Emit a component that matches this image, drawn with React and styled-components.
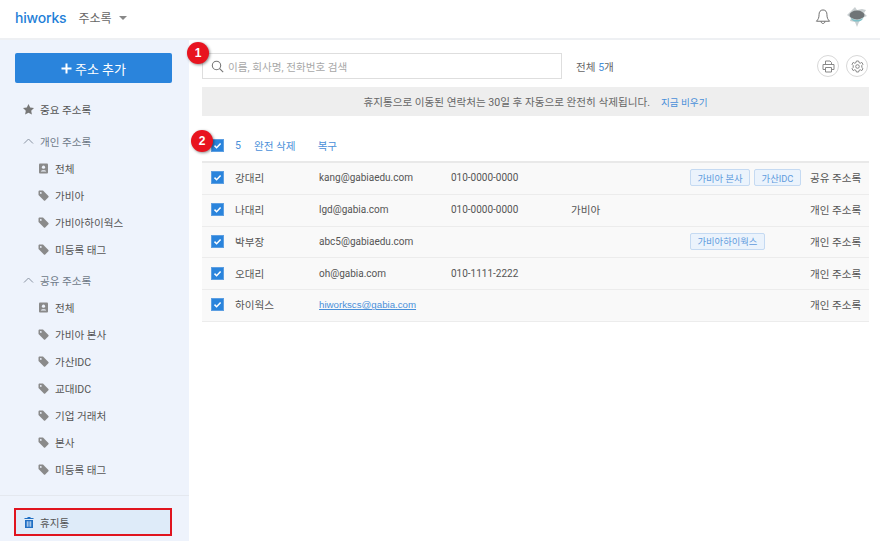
import React from "react";
import styled, { createGlobalStyle } from "styled-components";

const GlobalStyle = createGlobalStyle`
  html, body {
    margin: 0;
    padding: 0;
    background: #fff;
  }
  body {
    font-family: "Roboto", "Noto Sans CJK KR", sans-serif;
    font-size: 10.6px;
    color: #555;
  }
`;

const Page = styled.div`
  position: relative;
  width: 880px;
  height: 541px;
  overflow: hidden;
  display: flex;
  flex-direction: column;
`;

const Header = styled.header`
  display: flex;
  align-items: center;
  flex: none;
  height: 40px;
  padding: 0 13px 4px 15px;
  box-sizing: border-box;
  border-bottom: 2px solid #eef0f3;
`;

const Logo = styled.div`
  font-family: "Inter", "Liberation Sans", sans-serif;
  font-size: 14px;
  font-weight: 500;
  letter-spacing: -0.2px;
  color: #1f7fd8;
`;

const AppName = styled.div`
  margin-left: 12px;
  font-size: 12px;
  color: #666;
`;

const Caret = styled.span`
  margin-left: 7px;
  margin-top: 1px;
  width: 0;
  height: 0;
  border-left: 4px solid transparent;
  border-right: 4px solid transparent;
  border-top: 4px solid #888;
`;

const HeaderIcons = styled.div`
  margin-left: auto;
  display: flex;
  align-items: center;
  gap: 16px;
`;

const Body = styled.div`
  flex: 1;
  display: flex;
  min-height: 0;
`;

const Sidebar = styled.aside`
  width: 189px;
  flex: none;
  background: #eef3fc;
  display: flex;
  flex-direction: column;
  padding-top: 13px;
  box-sizing: border-box;
`;

const AddButton = styled.button`
  margin: 0 17px 0 15px;
  height: 30px;
  border: 0;
  border-radius: 2px;
  background: #2a84dc;
  color: #fff;
  font: inherit;
  font-size: 13px;
  display: flex;
  align-items: center;
  justify-content: center;
  gap: 3px;
  padding: 0;
`;

const Nav = styled.nav`
  flex: 1;
  padding-top: 13px;
`;

const Row = styled.div`
  display: flex;
  align-items: center;
  height: 27px;
  padding-left: ${(p) => (p.$child ? "38px" : "23px")};
  margin-top: ${(p) => (p.$gap ? `${p.$gap}px` : 0)};
  gap: 6px;
  color: ${(p) => (p.$group ? "#6f7a88" : "#555")};
`;

const SideFooter = styled.div`
  flex: none;
  height: 46px;
  box-sizing: border-box;
  border-top: 1px solid #e4e8ef;
  padding: 12px 17px 0 14px;
`;

const TrashItem = styled.div`
  height: 28px;
  box-sizing: border-box;
  border: 2px solid #e0141f;
  background: #deebf9;
  display: flex;
  align-items: center;
  gap: 6px;
  padding-left: 8px;
  color: #555;
`;

const Main = styled.main`
  flex: 1;
  padding: 13px 11px 0 13px;
  min-width: 0;
`;

const SearchRow = styled.div`
  display: flex;
  align-items: center;
  height: 26px;
`;

const SearchBox = styled.div`
  width: 360px;
  height: 26px;
  box-sizing: border-box;
  border: 1px solid #dedede;
  display: flex;
  align-items: center;
  gap: 4px;
  padding-left: 8px;
  color: #a8a8a8;
`;

const Total = styled.div`
  margin-left: 14px;
  color: #666;
`;

const Blue = styled.span`
  color: #4a90d9;
`;

const RoundButtons = styled.div`
  margin-left: auto;
  display: flex;
  gap: 7px;
  padding-right: 1px;
`;

const RoundButton = styled.div`
  width: 22px;
  height: 22px;
  box-sizing: border-box;
  border: 1px solid #d8d8d8;
  border-radius: 50%;
  display: flex;
  align-items: center;
  justify-content: center;
`;

const Notice = styled.div`
  margin-top: 8px;
  height: 29px;
  background: #eeeeee;
  display: flex;
  align-items: center;
  justify-content: center;
  gap: 11px;
  color: #666;
`;

const NoticeLink = styled.span`
  color: #4a90d9;
  font-size: 9.6px;
`;

const ActionBar = styled.div`
  display: flex;
  align-items: center;
  height: 45px;
  box-sizing: border-box;
  padding: 14px 0 0 9px;
  color: #4a90d9;
`;

const ActionCount = styled.span`
  margin-left: 11px;
  width: 19px;
`;

const ActionLink = styled.span`
  margin-right: 22px;
`;

const Table = styled.div`
  border-top: 2px solid #e9e9e9;
`;

const TableRow = styled.div`
  display: grid;
  grid-template-columns: 24px 84px 132px 120px 119px 120px auto;
  align-items: center;
  height: 31.75px;
  box-sizing: border-box;
  padding: 0 0 1px 9px;
  background: #f9f9f9;
  border-bottom: 1px solid #ececec;
  color: #555;
`;

const Email = styled.span`
  font-size: 10px;
  ${(p) =>
    p.$link &&
    `
    font-family: "Liberation Sans", sans-serif;
    font-size: 9.7px;
    color: #4a90d9;
    text-decoration: underline;
  `}
`;

const Phone = styled.span`
  font-size: 10px;
`;

const Tags = styled.div`
  display: flex;
  gap: 4px;
`;

const Tag = styled.span`
  height: 17px;
  box-sizing: border-box;
  padding: 0 6.5px;
  border: 1px solid #c5daf2;
  border-radius: 2px;
  background: #ebf3fc;
  color: #5f9bdc;
  display: flex;
  align-items: center;
  font-size: 9.3px;
  white-space: nowrap;
`;

const Book = styled.span`
  white-space: nowrap;
`;

const Marker = styled.div`
  position: absolute;
  left: ${(p) => p.$x}px;
  top: ${(p) => p.$y}px;
  width: 22px;
  height: 22px;
  border-radius: 50%;
  background: #e8141f;
  color: #fff;
  font-family: "Liberation Sans", sans-serif;
  font-size: 12px;
  font-weight: 700;
  display: flex;
  align-items: center;
  justify-content: center;
  box-shadow: 1px 1px 3px rgba(0, 0, 0, 0.45);
`;

const CheckBox = styled.span`
  width: 11px;
  height: 11px;
  background: #2a84dc;
  border: 0.5px solid #5d9fe2;
  display: flex;
  align-items: center;
  justify-content: center;
`;

const Check = () => (
  <CheckBox>
    <svg width="9" height="9" viewBox="0 0 9 9" fill="none">
      <path d="M1.5 4.6 3.6 6.7 7.6 2.4" stroke="#fff" strokeWidth="1.5" />
    </svg>
  </CheckBox>
);

const TagIcon = () => (
  <svg width="11" height="11" viewBox="0 0 11 11" fill="#8a8a8a">
    <path d="M0.5 1.6C0.5 1 1 .5 1.6 .5H5L10.4 5.9C10.8 6.3 10.8 6.8 10.4 7.2L7.2 10.4C6.8 10.8 6.3 10.8 5.9 10.4L.5 5ZM2.8 2A.9.9 0 1 0 2.8 3.8.9.9 0 1 0 2.8 2Z" fillRule="evenodd" />
  </svg>
);

const ContactIcon = () => (
  <svg width="11" height="11" viewBox="0 0 11 11">
    <rect x="1" y="0.5" width="9" height="10" rx="1" fill="#8a8a8a" />
    <circle cx="5.5" cy="4.2" r="1.6" fill="#eef3fc" />
    <path d="M2.8 8.6C3 6.8 8 6.8 8.2 8.6Z" fill="#eef3fc" />
  </svg>
);

const StarIcon = () => (
  <svg width="11" height="11" viewBox="0.5 0.5 11 11" fill="#777">
    <path d="M6 .6 7.7 4.1 11.5 4.6 8.7 7.3 9.4 11.1 6 9.3 2.6 11.1 3.3 7.3 .5 4.6 4.3 4.1Z" />
  </svg>
);

const ChevronUp = () => (
  <svg width="11" height="11" viewBox="0 0 11 11" fill="none">
    <path d="M1 7.5 5.5 3 10 7.5" stroke="#8a94a3" strokeWidth="1" />
  </svg>
);

const TrashIcon = () => (
  <svg width="10" height="11" viewBox="0 0 10 11" fill="#1f6fc4">
    <path d="M3.5 0H6.5V1H9.5V2H.5V1H3.5Z" />
    <path fillRule="evenodd" d="M1 3H9V11H1ZM2.8 4.2V9.8H3.7V4.2ZM4.6 4.2V9.8H5.4V4.2ZM6.3 4.2V9.8H7.2V4.2Z" />
  </svg>
);

const SearchIcon = () => (
  <svg width="13" height="13" viewBox="0 0 13 13" fill="none" stroke="#777" strokeWidth="1.1">
    <circle cx="5.5" cy="5.5" r="4.2" />
    <path d="M8.6 8.6 12.2 12.2" />
  </svg>
);

const BellIcon = () => (
  <svg width="16" height="18" viewBox="0 0 17 18" fill="none" stroke="#666" strokeWidth="1">
    <path d="M8.5 1.5C5.6 1.5 4.3 3.7 4.3 6.5 4.3 10 3.4 11.5 1.5 13.5H15.5C13.6 11.5 12.7 10 12.7 6.5 12.7 3.7 11.4 1.5 8.5 1.5Z" />
    <path d="M6.5 13.8C6.7 16.6 10.3 16.6 10.5 13.8" />
  </svg>
);

const Avatar = () => (
  <svg width="20" height="20" viewBox="0 0 20 20">
    <path d="M8 0 10 3 15 2 19 3 17 6 20 9 15 11 12 15 10 20 8 15 3 14 4 11 0 8 3 5Z" fill="#c9cfd1" />
    <ellipse cx="10" cy="8" rx="7.5" ry="4.4" fill="#6f7477" />
    <path d="M3 10C6 14 14 14 17 10L15 13C12 15 8 15 5 13Z" fill="#7cc0c8" />
  </svg>
);

const PrintIcon = () => (
  <svg width="13" height="13" viewBox="0 0 13 13" fill="none" stroke="#888" strokeWidth="1">
    <path d="M3.5 4.5V1H8L9.5 2.5V4.5" />
    <path d="M3.5 9.5H1V4.5H12V9.5H9.5" />
    <path d="M3.5 7.5H9.5V12H3.5Z" />
  </svg>
);

const GearIcon = () => (
  <svg width="13" height="13" viewBox="0 0 13 13" fill="none" stroke="#888" strokeWidth="1">
    <path d="M5.4 1H7.6L8 2.6 9.4 3.2 10.8 2.4 12 4.3 10.8 5.5V7.5L12 8.7 10.8 10.6 9.4 9.8 8 10.4 7.6 12H5.4L5 10.4 3.6 9.8 2.2 10.6 1 8.7 2.2 7.5V5.5L1 4.3 2.2 2.4 3.6 3.2 5 2.6Z" />
    <circle cx="6.5" cy="6.5" r="1.8" />
  </svg>
);

const PlusIcon = () => (
  <svg width="11" height="11" viewBox="0 0 11 11" fill="#fff">
    <path d="M4.5 0.5H6.5V4.5H10.5V6.5H6.5V10.5H4.5V6.5H.5V4.5H4.5Z" />
  </svg>
);

const personal = ["가비아", "가비아하이웍스", "미등록 태그"];
const shared = ["가비아 본사", "가산IDC", "교대IDC", "기업 거래처", "본사", "미등록 태그"];

const contacts = [
  { name: "강대리", email: "kang@gabiaedu.com", phone: "010-0000-0000", tags: ["가비아 본사", "가산IDC"], book: "공유 주소록" },
  { name: "나대리", email: "lgd@gabia.com", phone: "010-0000-0000", company: "가비아", book: "개인 주소록" },
  { name: "박부장", email: "abc5@gabiaedu.com", tags: ["가비아하이웍스"], book: "개인 주소록" },
  { name: "오대리", email: "oh@gabia.com", phone: "010-1111-2222", book: "개인 주소록" },
  { name: "하이웍스", email: "hiworkscs@gabia.com", link: true, book: "개인 주소록" },
];

export default function App() {
  return (
    <Page>
      <GlobalStyle />
      <Header>
        <Logo>hiworks</Logo>
        <AppName>주소록</AppName>
        <Caret />
        <HeaderIcons>
          <BellIcon />
          <Avatar />
        </HeaderIcons>
      </Header>
      <Body>
        <Sidebar>
          <AddButton>
            <PlusIcon /> 주소 추가
          </AddButton>
          <Nav>
            <Row><StarIcon />중요 주소록</Row>
            <Row $group $gap={5}><ChevronUp />개인 주소록</Row>
            <Row $child><ContactIcon />전체</Row>
            {personal.map((t) => (
              <Row $child key={t}><TagIcon />{t}</Row>
            ))}
            <Row $group $gap={4}><ChevronUp />공유 주소록</Row>
            <Row $child><ContactIcon />전체</Row>
            {shared.map((t) => (
              <Row $child key={t}><TagIcon />{t}</Row>
            ))}
          </Nav>
          <SideFooter>
            <TrashItem><TrashIcon />휴지통</TrashItem>
          </SideFooter>
        </Sidebar>
        <Main>
          <SearchRow>
            <SearchBox><SearchIcon />이름, 회사명, 전화번호 검색</SearchBox>
            <Total>전체 <Blue>5</Blue>개</Total>
            <RoundButtons>
              <RoundButton><PrintIcon /></RoundButton>
              <RoundButton><GearIcon /></RoundButton>
            </RoundButtons>
          </SearchRow>
          <Notice>
            <span>휴지통으로 이동된 연락처는 30일 후 자동으로 완전히 삭제됩니다.</span>
            <NoticeLink>지금 비우기</NoticeLink>
          </Notice>
          <ActionBar>
            <Check />
            <ActionCount>5</ActionCount>
            <ActionLink>완전 삭제</ActionLink>
            <ActionLink>복구</ActionLink>
          </ActionBar>
          <Table>
            {contacts.map((c) => (
              <TableRow key={c.name}>
                <Check />
                <span>{c.name}</span>
                <Email $link={c.link}>{c.email}</Email>
                <Phone>{c.phone}</Phone>
                <span>{c.company}</span>
                <Tags>
                  {(c.tags || []).map((t) => (
                    <Tag key={t}>{t}</Tag>
                  ))}
                </Tags>
                <Book>{c.book}</Book>
              </TableRow>
            ))}
          </Table>
        </Main>
      </Body>
      <Marker $x={187} $y={42}>1</Marker>
      <Marker $x={191} $y={130}>2</Marker>
    </Page>
  );
}
